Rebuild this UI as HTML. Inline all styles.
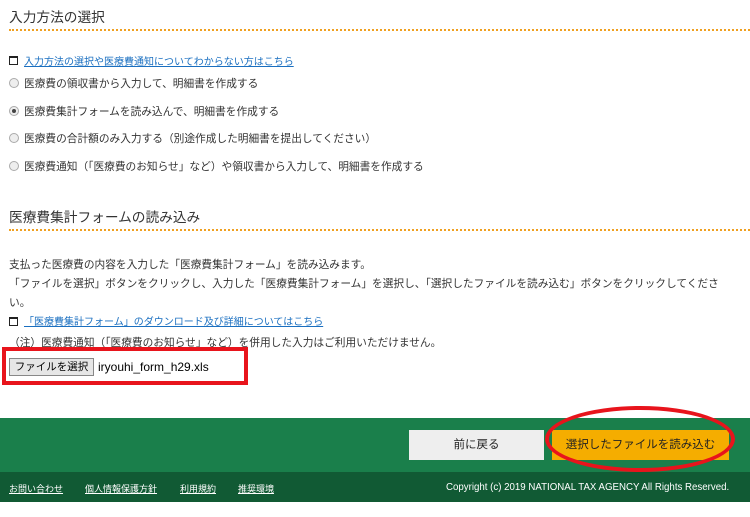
<!DOCTYPE html>
<html><head><meta charset="utf-8"><style>
body{margin:0;width:750px;height:517px;position:relative;background:#fff;font-family:"Liberation Sans","Noto Sans CJK JP",sans-serif;color:#333;overflow:hidden}
.a{position:absolute;white-space:nowrap}
h2{position:absolute;margin:0;font-weight:normal;font-size:13.7px;color:#333;left:9px}
.line{position:absolute;left:9px;right:0;border-top:2px dotted #f0a020;height:0}
.t{font-size:10.7px}
.r{position:absolute;left:9px;width:8px;height:8px;border:1px solid #aaa;border-radius:50%;background:#eee}
.r.on::after{content:"";position:absolute;left:2px;top:2px;width:4px;height:4px;border-radius:50%;background:#444}
.ic{position:absolute;left:9px;width:7px;height:6px;border:1px solid #222;border-top-width:2px}
a{color:#1a6fc0;text-decoration:underline}
.f{position:absolute;top:482px;font-size:9px;color:#fff;text-decoration:underline;white-space:nowrap}
</style></head><body>
<h2 style="top:6px">入力方法の選択</h2>
<div class="line" style="top:29px"></div>
<div class="ic" style="top:56px"></div>
<div class="a t" style="left:24px;top:53px;font-size:10px"><a>入力方法の選択や医療費通知についてわからない方はこちら</a></div>
<div class="r" style="top:78px"></div><div class="a t" style="left:24px;top:76px">医療費の領収書から入力して、明細書を作成する</div>
<div class="r on" style="top:106px"></div><div class="a t" style="left:24px;top:104px">医療費集計フォームを読み込んで、明細書を作成する</div>
<div class="r" style="top:133px"></div><div class="a t" style="left:24px;top:131px">医療費の合計額のみ入力する（別途作成した明細書を提出してください）</div>
<div class="r" style="top:161px"></div><div class="a t" style="left:24px;top:159px">医療費通知（「医療費のお知らせ」など）や領収書から入力して、明細書を作成する</div>
<h2 style="top:206px">医療費集計フォームの読み込み</h2>
<div class="line" style="top:229px"></div>
<div class="a t" style="left:9px;top:257px">支払った医療費の内容を入力した「医療費集計フォーム」を読み込みます。</div>
<div class="a t" style="left:9px;top:276px">「ファイルを選択」ボタンをクリックし、入力した「医療費集計フォーム」を選択し、「選択したファイルを読み込む」ボタンをクリックしてくださ</div>
<div class="a t" style="left:9px;top:295px">い。</div>
<div class="ic" style="top:317px"></div>
<div class="a t" style="left:24px;top:313px;font-size:10px"><a>「医療費集計フォーム」のダウンロード及び詳細についてはこちら</a></div>
<div class="a t" style="left:9px;top:335px">（注）医療費通知（「医療費のお知らせ」など）を併用した入力はご利用いただけません。</div>
<div class="a" style="left:2px;top:347px;width:238px;height:30px;border:4px solid #e8141c;background:#fff"></div>
<div class="a t" style="left:9px;top:358px;width:85px;height:18px;border:1px solid #888;background:#e6e6e6;text-align:center;line-height:16px;box-sizing:border-box;font-size:10.5px;color:#000">ファイルを選択</div>
<div class="a t" style="left:98px;top:360px;color:#000;font-size:12px">iryouhi_form_h29.xls</div>
<div class="a" style="left:0;top:418px;width:750px;height:54px;background:#1a7f4b"></div>
<div class="a" style="left:0;top:472px;width:750px;height:30px;background:#115a34"></div>
<div class="a" style="left:409px;top:430px;width:135px;height:30px;background:#eee;text-align:center;line-height:30px;font-size:11.5px;color:#222">前に戻る</div>
<div class="a" style="left:552px;top:430px;width:177px;height:30px;background:#f5ad00;text-align:center;line-height:30px;font-size:11.5px;color:#222">選択したファイルを読み込む</div>
<div class="a" style="left:545px;top:406px;width:182px;height:58px;border:4px solid #e8141c;border-radius:50%"></div>
<div class="f" style="left:9px">お問い合わせ</div>
<div class="f" style="left:85px">個人情報保護方針</div>
<div class="f" style="left:180px">利用規約</div>
<div class="f" style="left:238px">推奨環境</div>
<div class="a" style="left:446px;top:482px;font-size:9.7px;color:#fff">Copyright (c) 2019 NATIONAL TAX AGENCY All Rights Reserved.</div>
</body></html>
